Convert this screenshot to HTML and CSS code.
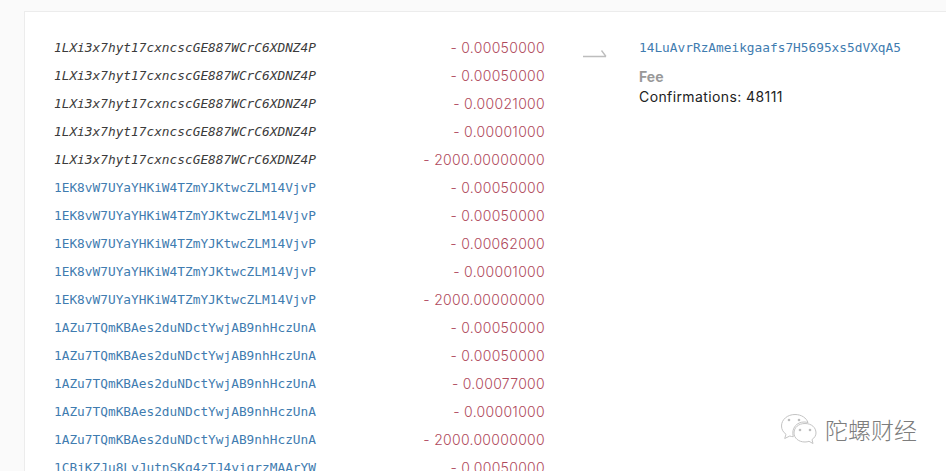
FILE: index.html
```html
<!DOCTYPE html>
<html lang="en">
<head>
<meta charset="utf-8">
<title>Transaction</title>
<link rel="stylesheet" href="styles.css">
</head>
<body>
<main class="panel">
  <section class="inputs">
    <div class="row"><span class="addr spent">1LXi3x7hyt17cxncscGE887WCrC6XDNZ4P</span><span class="amt">- 0.00050000</span></div>
    <div class="row"><span class="addr spent">1LXi3x7hyt17cxncscGE887WCrC6XDNZ4P</span><span class="amt">- 0.00050000</span></div>
    <div class="row"><span class="addr spent">1LXi3x7hyt17cxncscGE887WCrC6XDNZ4P</span><span class="amt">- 0.00021000</span></div>
    <div class="row"><span class="addr spent">1LXi3x7hyt17cxncscGE887WCrC6XDNZ4P</span><span class="amt">- 0.00001000</span></div>
    <div class="row"><span class="addr spent">1LXi3x7hyt17cxncscGE887WCrC6XDNZ4P</span><span class="amt">- 2000.00000000</span></div>
    <div class="row"><span class="addr">1EK8vW7UYaYHKiW4TZmYJKtwcZLM14VjvP</span><span class="amt">- 0.00050000</span></div>
    <div class="row"><span class="addr">1EK8vW7UYaYHKiW4TZmYJKtwcZLM14VjvP</span><span class="amt">- 0.00050000</span></div>
    <div class="row"><span class="addr">1EK8vW7UYaYHKiW4TZmYJKtwcZLM14VjvP</span><span class="amt">- 0.00062000</span></div>
    <div class="row"><span class="addr">1EK8vW7UYaYHKiW4TZmYJKtwcZLM14VjvP</span><span class="amt">- 0.00001000</span></div>
    <div class="row"><span class="addr">1EK8vW7UYaYHKiW4TZmYJKtwcZLM14VjvP</span><span class="amt">- 2000.00000000</span></div>
    <div class="row"><span class="addr">1AZu7TQmKBAes2duNDctYwjAB9nhHczUnA</span><span class="amt">- 0.00050000</span></div>
    <div class="row"><span class="addr">1AZu7TQmKBAes2duNDctYwjAB9nhHczUnA</span><span class="amt">- 0.00050000</span></div>
    <div class="row"><span class="addr">1AZu7TQmKBAes2duNDctYwjAB9nhHczUnA</span><span class="amt">- 0.00077000</span></div>
    <div class="row"><span class="addr">1AZu7TQmKBAes2duNDctYwjAB9nhHczUnA</span><span class="amt">- 0.00001000</span></div>
    <div class="row"><span class="addr">1AZu7TQmKBAes2duNDctYwjAB9nhHczUnA</span><span class="amt">- 2000.00000000</span></div>
    <div class="row"><span class="addr">1CBjKZJu8LyJutnSKq4zTJ4yigrzMAArYW</span><span class="amt">- 0.00050000</span></div>
  </section>
  <svg class="arrow" width="26" height="10" viewBox="0 0 26 10" aria-hidden="true">
    <path d="M1 8.500H24M19.500 2.500L24 8.500" fill="none" stroke="#bdbdbd" stroke-width="1.300"/>
  </svg>
  <section class="outputs">
    <div class="addr">14LuAvrRzAmeikgaafs7H5695xs5dVXqA5</div>
    <div class="fee">Fee</div>
    <div class="conf">Confirmations: 48111</div>
  </section>
</main>
<aside class="mark">
  <svg class="mark-icon" width="38" height="32" viewBox="0 0 38 32" aria-hidden="true">
    <path d="M15 1.500C7.500 1.500 1.500 6.500 1.500 13C1.500 16.500 3.300 19.300 6 21.300L4.700 25.500L9.800 23C11 23.400 12 23.700 13.300 23.700" fill="#fff" stroke="#c4c4c4" stroke-width="1"/>
    <path d="M13.300 23.700C11 15 17 9 24 9C25.500 9 26.800 9.200 28 9.600C26.500 5 21.500 1.500 15 1.500" fill="#fff" stroke="#c4c4c4" stroke-width="1"/>
    <path d="M25 10.500C18.500 10.500 14 14.500 14 20C14 25 18.500 29 25 29C26.500 29 27.800 28.700 29 28.300L33 30.500L32 26.600C34.500 24.800 36 22.500 36 20C36 14.500 31.500 10.500 25 10.500Z" fill="#fff" stroke="#c4c4c4" stroke-width="1"/>
    <circle cx="9" cy="7" r="1.300" fill="#bdbdbd"/><circle cx="19" cy="7" r="1.300" fill="#bdbdbd"/>
    <circle cx="20" cy="17" r="1.300" fill="#bdbdbd"/><circle cx="30" cy="17" r="1.300" fill="#bdbdbd"/>
  </svg>
  <span class="mark-text">陀螺财经</span>
</aside>
</body>
</html>
```

FILE: styles.css
```css
html, body {
  margin: 0;
  height: 471px;
  overflow: hidden;
  background: #fafafa;
}
body {
  position: relative;
  padding: 11px 0 0 24px;
  box-sizing: border-box;
}
.panel {
  display: flex;
  align-items: flex-start;
  height: 460px;
  padding: 22px 0 0 29px;
  box-sizing: border-box;
  background: #fff;
  border-top: 1px solid #ececec;
  border-left: 1px solid #ececec;
  overflow: hidden;
}
.inputs {
  width: 491px;
  flex: none;
}
.row {
  display: flex;
  justify-content: space-between;
  align-items: center;
  height: 28px;
}
.addr {
  font: 12.800px/28px "DejaVu Sans Mono", monospace;
  color: #3f7cb0;
  white-space: nowrap;
}
.spent {
  font-style: italic;
  color: #3b3b3b;
}
.amt {
  font: 300 14px/28px Inter, sans-serif;
  letter-spacing: 0.300px;
  color: #b04a5c;
  white-space: nowrap;
}
.arrow {
  flex: none;
  margin: 14px 0 0 37px;
}
.outputs {
  margin-left: 31px;
}
.fee {
  font: 700 14px/20px Inter, sans-serif;
  color: #999;
  margin-top: 5px;
}
.conf {
  font: 400 14px/20px Inter, sans-serif;
  letter-spacing: 0.400px;
  color: #222;
}
.mark {
  position: absolute;
  left: 780px;
  top: 413px;
  display: flex;
  align-items: center;
  gap: 7px;
}
.mark-text {
  font: 300 23px/30px "Noto Sans CJK SC", sans-serif;
  color: #7d7d7d;
}
```
